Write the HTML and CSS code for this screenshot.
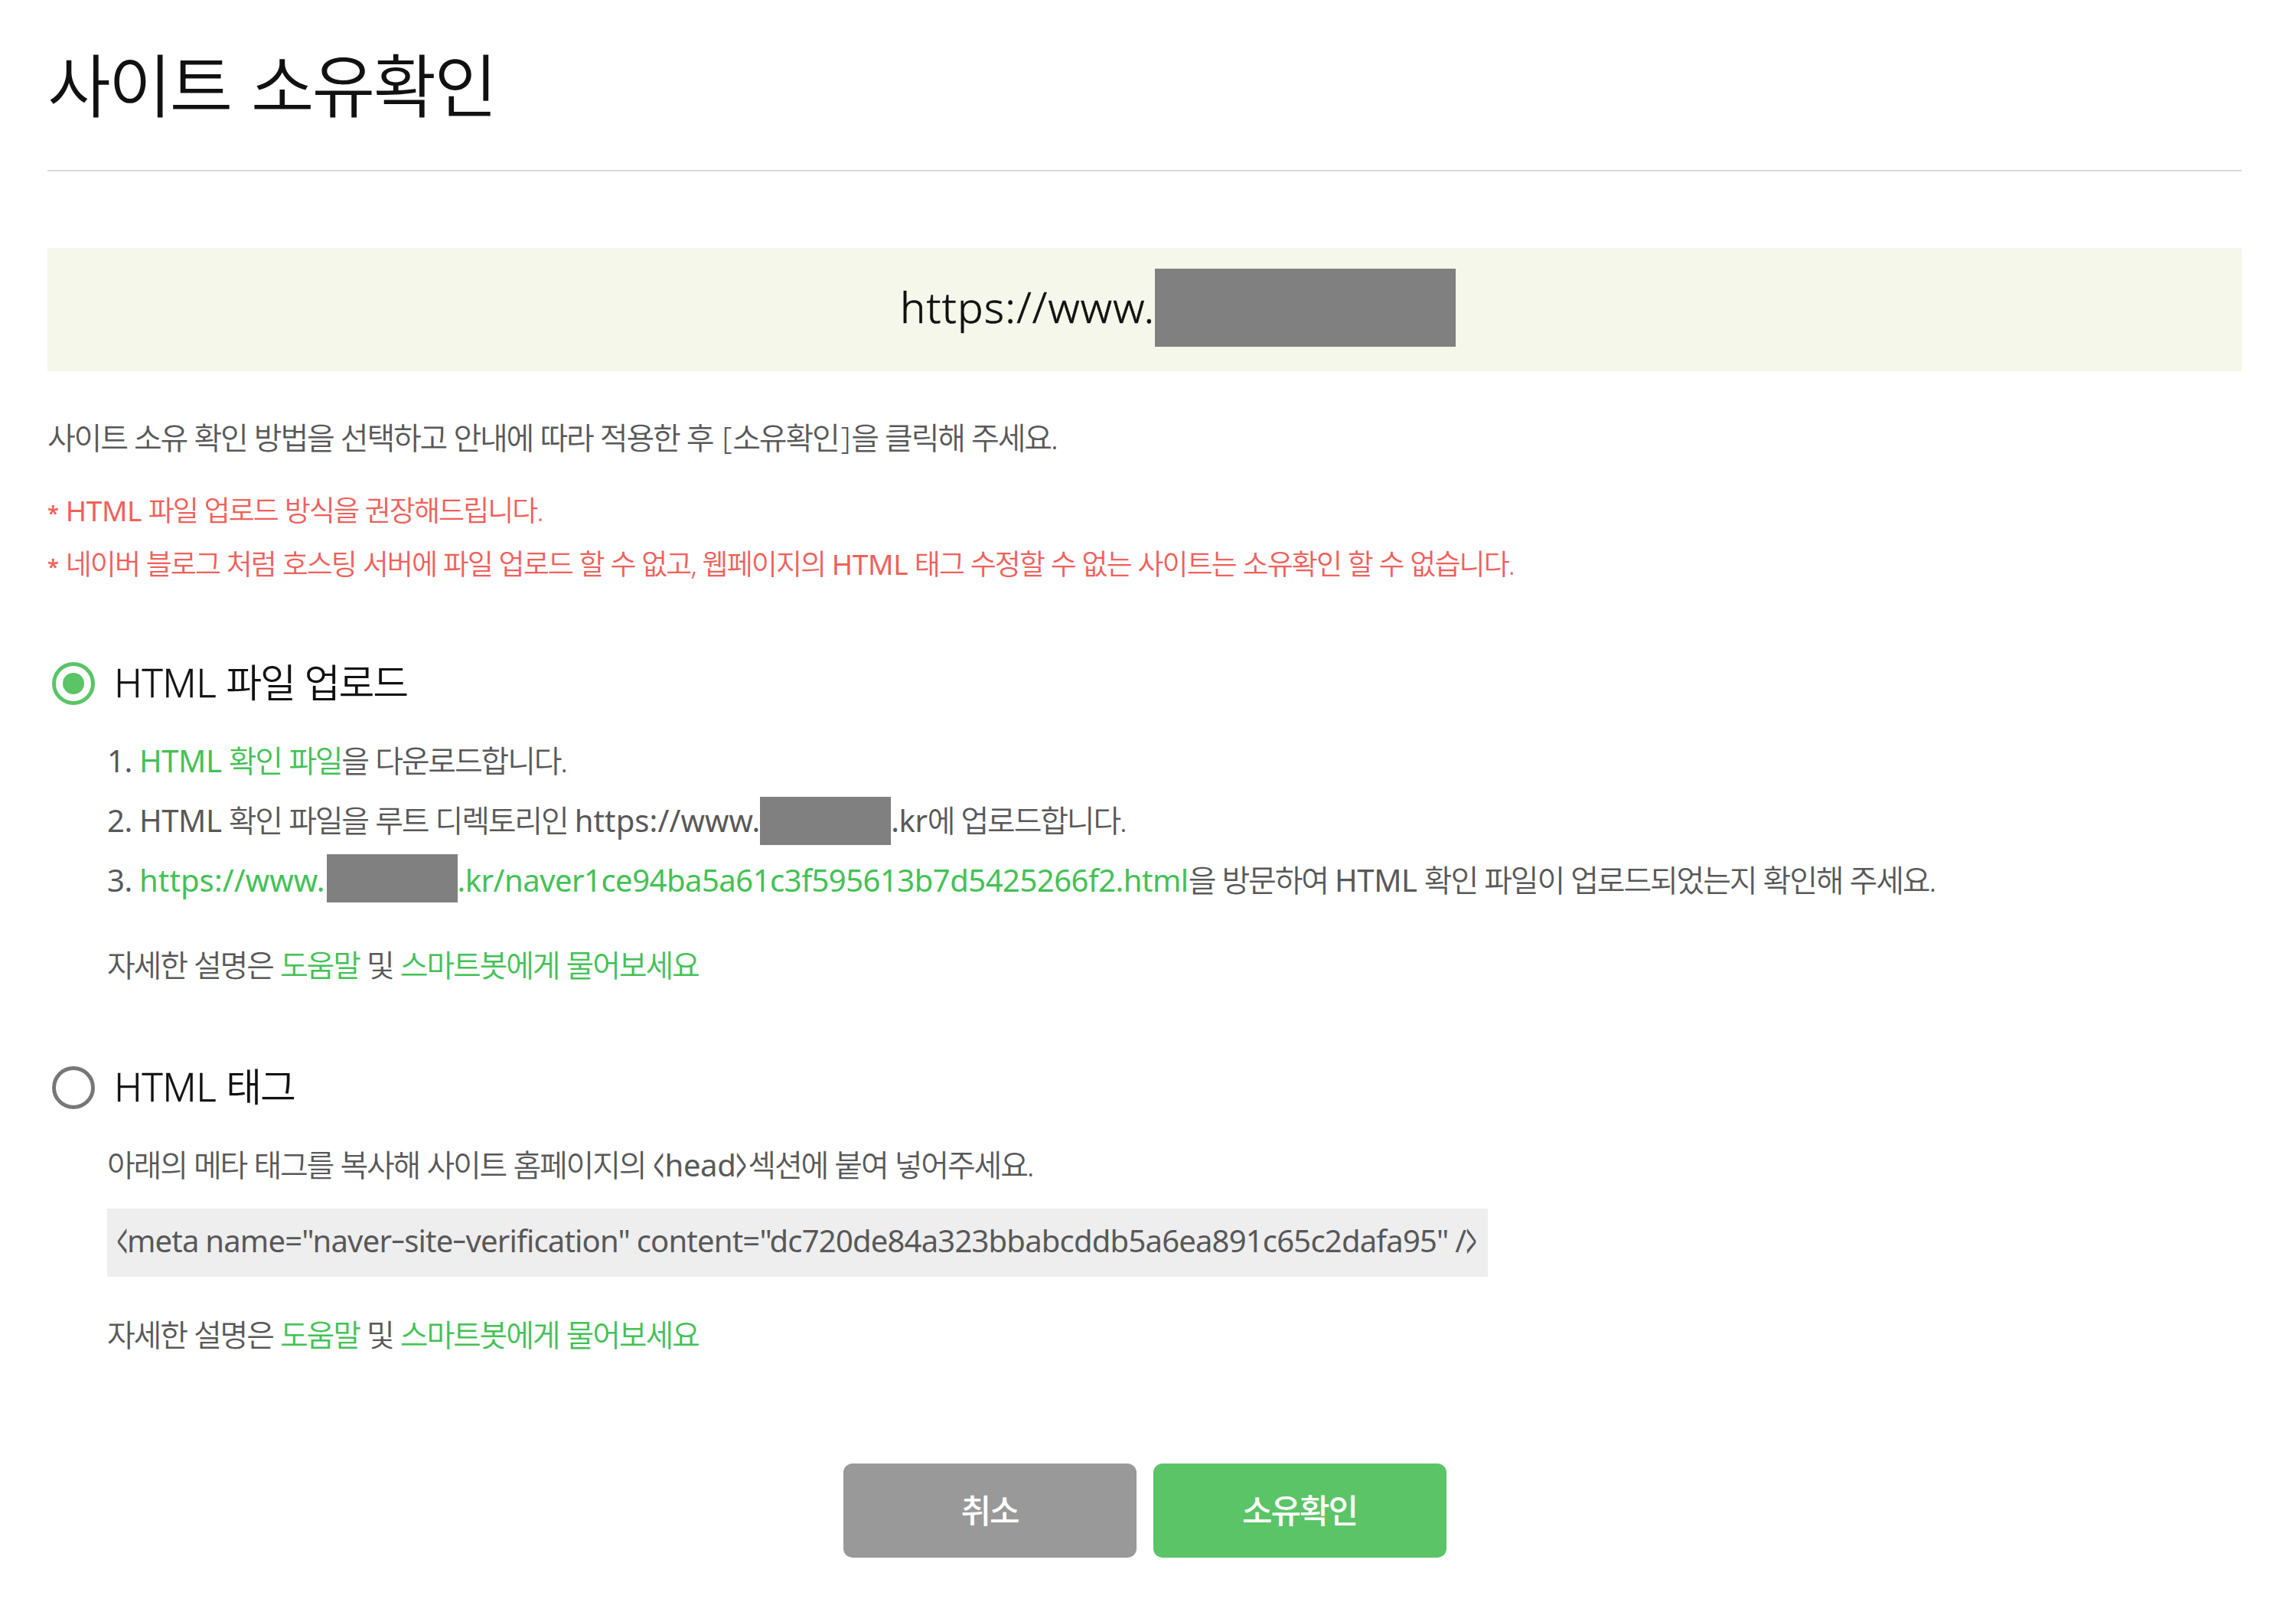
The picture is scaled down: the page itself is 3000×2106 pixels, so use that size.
FILE: index.html
```html
<!DOCTYPE html>
<html lang="ko">
<head>
    <meta charset="UTF-8">
    <meta name="viewport" content="width=device-width, initial-scale=1.0">
    <title>사이트 소유확인</title>
    <link rel="stylesheet" href="styles.css">
</head>
<body>
    <main class="container">
        <h1>사이트 소유확인</h1>

        <div class="site-url"><span class="en url">https://www.</span><span class="mask mask-lg"></span></div>

        <p class="guide">사이트 소유 확인 방법을 선택하고 안내에 따라 적용한 후 <span class="bracket">[</span>소유확인<span class="bracket">]</span>을 클릭해 주세요.</p>
        <p class="notice"><span class="star">*</span> <span class="en">HTML</span> 파일 업로드 방식을 권장해드립니다.</p>
        <p class="notice"><span class="star">*</span> 네이버 블로그 처럼 호스팅 서버에 파일 업로드 할 수 없고, 웹페이지의 <span class="en">HTML</span> 태그 수정할 수 없는 사이트는 소유확인 할 수 없습니다.</p>

        <section class="method">
            <h2><span class="radio checked"></span><span class="label"><span class="en">HTML</span> 파일 업로드</span></h2>
            <div class="detail">
                <p><span class="en">1.</span> <a><span class="en">HTML</span> 확인 파일</a>을 다운로드합니다.</p>
                <p><span class="en">2.</span> <span class="en">HTML</span> 확인 파일을 루트 디렉토리인 <span class="en url">https://www.</span><span class="mask"></span><span class="en">.kr</span>에 업로드합니다.</p>
                <p><span class="en">3.</span> <a class="en url">https://www.</a><span class="mask mask-link"></span><a class="en link">.kr/naver1ce94ba5a61c3f595613b7d5425266f2.html</a>을 방문하여 <span class="en">HTML</span> 확인 파일이 업로드되었는지 확인해 주세요.</p>
                <p class="help">자세한 설명은 <a>도움말</a> 및 <a>스마트봇에게 물어보세요</a></p>
            </div>
        </section>

        <section class="method">
            <h2><span class="radio"></span><span class="label"><span class="en">HTML</span> 태그</span></h2>
            <div class="detail">
                <p>아래의 메타 태그를 복사해 사이트 홈페이지의 <span class="en"><span class="angle">&lt;</span>head<span class="angle">&gt;</span></span>섹션에 붙여 넣어주세요.</p>
                <code class="en"><span class="angle">&lt;</span>meta name="naver<span class="dash">-</span>site<span class="dash">-</span>verification" content="dc720de84a323bbabcddb5a6ea891c65c2dafa95" /<span class="angle">&gt;</span></code>
                <p class="help">자세한 설명은 <a>도움말</a> 및 <a>스마트봇에게 물어보세요</a></p>
            </div>
        </section>

        <div class="buttons">
            <button class="cancel">취소</button>
            <button class="confirm">소유확인</button>
        </div>
    </main>
</body>
</html>
```
FILE: styles.css
```css
/* Global styles */
* {
    box-sizing: border-box;
}

body {
    margin: 0;
    background-color: #fff;
    color: #585858;
    font-family: "Noto Sans", "Noto Sans CJK KR", sans-serif;
    font-size: 40px;
    font-weight: 350;
    letter-spacing: -2.2px;
    word-spacing: 1px;
}

h1, h2, p {
    margin: 0;
    font-weight: 350;
}

.container {
    margin: 0 71px 0 62px;
}

/* Latin text needs looser tracking than Hangul */
.en {
    font-family: "Noto Sans", sans-serif;
    font-weight: 400;
    letter-spacing: -0.4px;
}

.url {
    letter-spacing: 0.1px;
}

.link {
    letter-spacing: -0.5px;
}

/* Page title */
h1 {
    height: 224px;
    padding-top: 51px;
    border-bottom: 2px solid #d8d8d8;
    color: #111;
    font-size: 90px;
    line-height: 120px;
    letter-spacing: -3px;
    word-spacing: 6px;
}

/* Site address bar */
.site-url {
    display: flex;
    align-items: center;
    height: 161px;
    margin: 100px 0 57px;
    padding-left: 1114px;
    background-color: #f4f7e9;
    color: #111;
    font-size: 56px;
}

.site-url .url {
    margin-bottom: 9px;
    font-weight: 300;
    letter-spacing: 1.2px;
    -webkit-text-stroke: 0.6px #111;
}

/* Hidden part of the domain */
.mask {
    display: inline-block;
    width: 171px;
    height: 63px;
    vertical-align: -17px;
    background-color: #808080;
}

.mask-link {
    margin-left: 2px;
    vertical-align: -14px;
}

.mask-lg {
    width: 393px;
    height: 102px;
    margin-bottom: 5px;
}

.guide {
    line-height: 60px;
    margin-bottom: 30px;
}

.bracket {
    margin: 0 3px;
}

.notice {
    color: #f0605a;
    font-size: 37px;
    line-height: 70px;
    letter-spacing: -1.93px;
}

.star {
    display: inline-block;
    width: 15px;
    font-size: 27px;
    font-weight: 600;
    line-height: 26px;
}

/* Verification methods */
.method {
    margin-top: 91px;
}

.method h2 {
    display: flex;
    align-items: center;
    height: 60px;
    padding-left: 6px;
    color: #111;
    font-size: 51px;
    word-spacing: 2px;
}

.method h2 .en {
    font-weight: 300;
    -webkit-text-stroke: 0.4px #111;
}

.radio {
    display: flex;
    align-items: center;
    justify-content: center;
    width: 56px;
    height: 56px;
    margin-right: 25px;
    border: 5px solid #777;
    border-radius: 50%;
}

.radio.checked {
    border-color: #5ac467;
}

.radio.checked::after {
    content: "";
    width: 28px;
    height: 28px;
    border-radius: 50%;
    background-color: #5ac467;
}

.label {
    margin-bottom: 9px;
}

.detail {
    margin: 32px 0 0 78px;
}

.detail p {
    height: 78px;
    line-height: 78px;
    white-space: nowrap;
}

.detail a {
    color: #43c155;
}

.detail .help {
    margin-top: 33px;
}

.detail code {
    display: block;
    width: 1804px;
    height: 89px;
    margin: 18px 0 37px;
    padding-left: 12px;
    background-color: #eee;
    letter-spacing: -0.8px;
    word-spacing: -1px;
    line-height: 84px;
    white-space: nowrap;
}

.detail code + .help {
    margin-top: 0;
}

.angle {
    display: inline-block;
    width: 16px;
    text-align: center;
    text-indent: -4px;
    transform: scale(0.6, 1.7);
}

code .angle {
    margin-right: -2px;
}

.dash {
    display: inline-block;
    width: 17px;
    text-align: center;
    transform: translateY(-3px) scaleX(1.5);
}

/* Buttons */
.buttons {
    display: flex;
    gap: 22px;
    justify-content: center;
    margin-top: 129px;
}

.buttons button {
    width: 383px;
    height: 123px;
    padding: 0 0 4px;
    border: 0;
    border-radius: 12px;
    color: #fff;
    font-family: inherit;
    font-size: 43px;
    font-weight: 500;
    letter-spacing: -2px;
}

.cancel {
    background-color: #999;
}

.confirm {
    background-color: #5ac467;
}
```
